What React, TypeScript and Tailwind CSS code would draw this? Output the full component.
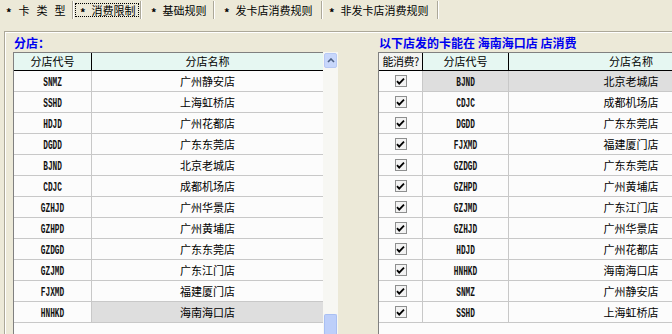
const leftRows: [string, string][] = [
  ["SNMZ", "广州静安店"],
  ["SSHD", "上海虹桥店"],
  ["HDJD", "广州花都店"],
  ["DGDD", "广东东莞店"],
  ["BJND", "北京老城店"],
  ["CDJC", "成都机场店"],
  ["GZHJD", "广州华景店"],
  ["GZHPD", "广州黄埔店"],
  ["GZDGD", "广东东莞店"],
  ["GZJMD", "广东江门店"],
  ["FJXMD", "福建厦门店"],
  ["HNHKD", "海南海口店"],
];

const rightRows: [string, string][] = [
  ["BJND", "北京老城店"],
  ["CDJC", "成都机场店"],
  ["DGDD", "广东东莞店"],
  ["FJXMD", "福建厦门店"],
  ["GZDGD", "广东东莞店"],
  ["GZHPD", "广州黄埔店"],
  ["GZJMD", "广东江门店"],
  ["GZHJD", "广州华景店"],
  ["HDJD", "广州花都店"],
  ["HNHKD", "海南海口店"],
  ["SNMZ", "广州静安店"],
  ["SSHD", "上海虹桥店"],
];

const tabs = [
  { label: ["卡", "类", "型"], w: "w-[72px]", pl: "pl-[6px]", gap: "gap-[7px]" },
  { label: ["消费限制"], w: "w-[66px]", pl: "pl-[5px]", gap: "gap-[6px]", active: true },
  { label: ["基础规则"], w: "w-[71px]", pl: "pl-[9px]", gap: "gap-[6px]" },
  { label: ["发卡店消费规则"], w: "w-[106px]", pl: "pl-[9px]", gap: "gap-[6px]" },
  { label: ["非发卡店消费规则"], w: "w-[114px]", pl: "pl-[6px]", gap: "gap-[6px]" },
];

function Code({ text }: { text: string }) {
  // narrow bitmap-ish look of the original
  return (
    <span className="inline-block scale-x-[0.6] font-['Liberation_Mono',monospace] text-[13px] font-bold leading-[20px] text-[#111]">
      {text}
    </span>
  );
}

function Check() {
  return (
    <span className="flex h-[12px] w-[12px] items-center justify-center border border-[#8e8f8f] bg-[#f3f3f3]">
      <svg width="9" height="9" viewBox="0 0 9 9" aria-hidden="true">
        <path d="M1 4.2 L3.2 6.6 L8 1.6" stroke="#000" strokeWidth="1.8" fill="none" />
      </svg>
    </span>
  );
}

function Sep() {
  return <div className="my-[1px] w-[2px] border-l border-r border-l-[#aca899] border-r-white" />;
}

export default function App() {
  return (
    <div className="h-[334px] w-[672px] overflow-hidden bg-[#ece9d8] font-['Noto_Sans_CJK_SC',sans-serif] text-black">
      <div className="flex h-[20px] text-[11px]">
        {tabs.map((t, i) => (
          <div key={i} className="flex">
            {i > 0 && <Sep />}
            <div className={`${t.w} flex items-center ${t.active ? "px-[1px] py-[3px]" : t.pl}`}>
              <div
                className={`flex h-full items-center ${t.gap} ${
                  t.active ? "w-full border border-dotted border-black pl-[4px]" : ""
                }`}
              >
                <span className="translate-y-[2px] font-bold">*</span>
                {t.label.map((l) => (
                  <span key={l}>{l}</span>
                ))}
              </div>
            </div>
          </div>
        ))}
        <Sep />
      </div>

      <div className="ml-[4px] mt-[11px] flex h-[303px] border-l border-t border-[#aca899] pl-[8px] shadow-[inset_1px_1px_0_#fff]">
        <div className="flex w-[325px] shrink-0 flex-col">
          <div className="h-[20px] pl-[1px] pt-[4px] text-[12px] font-bold leading-[14px] text-[#0000f0]">分店：</div>
          <div className="flex flex-1">
            <div className="flex w-[310px] flex-col border-l border-t border-[#808080] bg-[#fcfcfc] text-[11px]">
              <div className="flex h-[18px] border-b border-black bg-[#e6f7f2] leading-[17px]">
                <div className="w-[78px] border-r border-black text-center">分店代号</div>
                <div className="flex-1 text-center">分店名称</div>
              </div>
              {leftRows.map(([code, name], i) => (
                <div key={code} className="flex h-[21px] border-b border-[#c8c8c8] leading-[20px]">
                  <div className="w-[78px] border-r border-[#c8c8c8] text-center">
                    <Code text={code} />
                  </div>
                  <div className={`flex-1 text-center ${i === leftRows.length - 1 ? "bg-[#dedede]" : ""}`}>{name}</div>
                </div>
              ))}
            </div>
            <div className="flex w-[15px] flex-col bg-[#f7f7f3]">
              <div className="mx-[1px] mt-[1px] flex h-[15px] items-center justify-center rounded-[2px] border border-[#b7c9f5] bg-[#c8d7fb]">
                <svg width="8" height="5" viewBox="0 0 8 5" aria-hidden="true">
                  <path d="M1 4 L4 1 L7 4" stroke="#4d6185" strokeWidth="1.6" fill="none" />
                </svg>
              </div>
              <div className="flex-1" />
              <div className="mx-[1px] h-[20px] rounded-t-[2px] border border-b-0 border-[#a9bff3] bg-[#bdcffa]" />
            </div>
          </div>
        </div>

        <div className="ml-[40px] flex min-w-0 flex-1 flex-col">
          <div className="h-[20px] whitespace-nowrap pl-[1px] pt-[4px] text-[12px] font-bold leading-[14px] text-[#0000f0]">
            以下店发的卡能在 海南海口店 店消费
          </div>
          <div className="flex-1 overflow-hidden border-l border-t border-[#808080] bg-[#fcfcfc] text-[11px]">
            <div className="w-[374px]">
              <div className="flex h-[18px] border-b border-black leading-[17px]">
                <div className="w-[44px] whitespace-nowrap border-r border-black bg-[#f4f4f2] text-center tracking-[-0.5px]">
                  能消费?
                </div>
                <div className="w-[86px] border-r border-black bg-[#e6f7f2] text-center">分店代号</div>
                <div className="w-[244px] bg-[#e6f7f2] text-center">分店名称</div>
              </div>
              {rightRows.map(([code, name], i) => (
                <div key={code} className="flex h-[21px] border-b border-[#c8c8c8] leading-[20px]">
                  <div className="flex w-[44px] items-center justify-center border-r border-[#c8c8c8]">
                    <Check />
                  </div>
                  <div className={`w-[86px] border-r border-[#c8c8c8] text-center ${i === 0 ? "bg-[#dedede]" : ""}`}>
                    <Code text={code} />
                  </div>
                  <div className={`w-[244px] text-center ${i === 0 ? "bg-[#dedede]" : ""}`}>{name}</div>
                </div>
              ))}
            </div>
          </div>
        </div>
      </div>
    </div>
  );
}
